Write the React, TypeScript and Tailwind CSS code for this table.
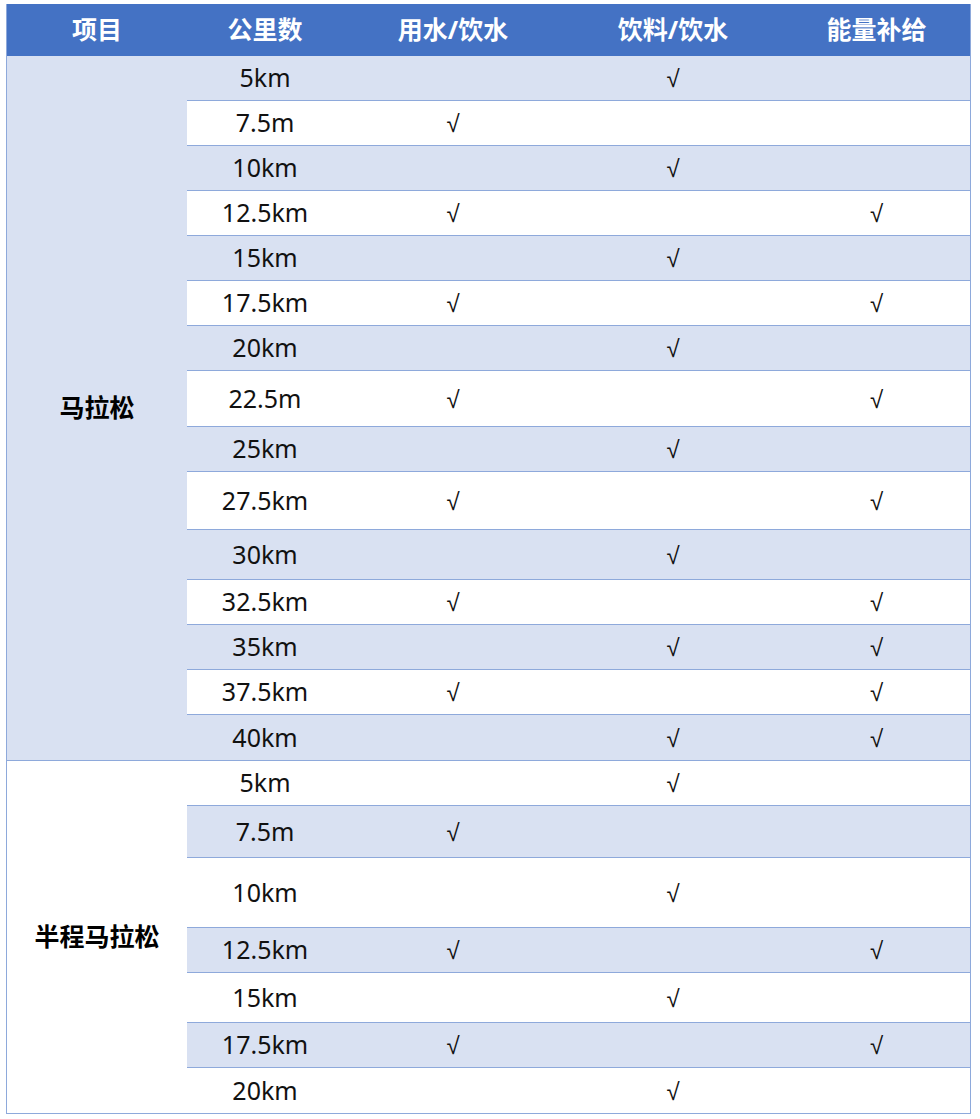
import React from "react";

type Row = { km: string; h: number; w?: boolean; d?: boolean; e?: boolean; blue: boolean };

const marathon: Row[] = [
  { km: "5km", h: 45, d: true, blue: true },
  { km: "7.5m", h: 45, w: true, blue: false },
  { km: "10km", h: 45, d: true, blue: true },
  { km: "12.5km", h: 45, w: true, e: true, blue: false },
  { km: "15km", h: 45, d: true, blue: true },
  { km: "17.5km", h: 45, w: true, e: true, blue: false },
  { km: "20km", h: 45, d: true, blue: true },
  { km: "22.5m", h: 56, w: true, e: true, blue: false },
  { km: "25km", h: 45, d: true, blue: true },
  { km: "27.5km", h: 58, w: true, e: true, blue: false },
  { km: "30km", h: 50, d: true, blue: true },
  { km: "32.5km", h: 45, w: true, e: true, blue: false },
  { km: "35km", h: 45, d: true, e: true, blue: true },
  { km: "37.5km", h: 45, w: true, e: true, blue: false },
  { km: "40km", h: 45, d: true, e: true, blue: true },
];

const half: Row[] = [
  { km: "5km", h: 45, d: true, blue: false },
  { km: "7.5m", h: 52, w: true, blue: true },
  { km: "10km", h: 70, d: true, blue: false },
  { km: "12.5km", h: 45, w: true, e: true, blue: true },
  { km: "15km", h: 50, d: true, blue: false },
  { km: "17.5km", h: 45, w: true, e: true, blue: true },
  { km: "20km", h: 45, d: true, blue: false },
];

const font = { fontFamily: '"Noto Sans", "Noto Sans CJK SC", sans-serif' };

// check mark in the sheet is a plain radical sign
function Tick({ on }: { on?: boolean }) {
  if (!on) return null;
  return <span className="font-['Liberation_Sans',sans-serif] text-[24px]">√</span>;
}

function DataRow({ r, last }: { r: Row; last: boolean }) {
  return (
    <div
      className={`flex items-center text-[25px] text-[#111] ${r.blue ? "bg-[#D9E1F2]" : "bg-white"} ${last ? "" : "border-b border-[#8EA9DB]"}`}
      style={{ height: r.h }}
    >
      <div className="w-[156px] text-center">{r.km}</div>
      <div className="w-[220px] text-center">
        <Tick on={r.w} />
      </div>
      <div className="w-[220px] text-center">
        <Tick on={r.d} />
      </div>
      <div className="flex-1 text-center">
        <Tick on={r.e} />
      </div>
    </div>
  );
}

function Group({ name, rows, blue, bottom }: { name: string; rows: Row[]; blue: boolean; bottom: boolean }) {
  return (
    <div className={`flex ${bottom ? "border-b border-[#8EA9DB]" : ""}`}>
      <div
        className={`w-[180px] flex items-center justify-center font-bold text-[25px] text-black ${blue ? "bg-[#D9E1F2]" : "bg-white"}`}
      >
        {name}
      </div>
      <div className="flex-1 flex flex-col">
        {rows.map((r, i) => (
          <DataRow key={i} r={r} last={i === rows.length - 1} />
        ))}
      </div>
    </div>
  );
}

export default function App() {
  return (
    <div className="bg-white w-[980px] h-[1119px] pt-[4px] pl-[6px]" style={font}>
      <div className="w-[965px] border-l border-r border-b border-[#8EA9DB]">
        <div className="flex items-center h-[52px] bg-[#4472C4] text-white font-bold text-[25px]">
          <div className="w-[180px] text-center">项目</div>
          <div className="w-[156px] text-center">公里数</div>
          <div className="w-[220px] text-center">用水/饮水</div>
          <div className="w-[220px] text-center">饮料/饮水</div>
          <div className="flex-1 text-center">能量补给</div>
        </div>
        <Group name="马拉松" rows={marathon} blue={true} bottom={true} />
        <Group name="半程马拉松" rows={half} blue={false} bottom={false} />
      </div>
    </div>
  );
}
